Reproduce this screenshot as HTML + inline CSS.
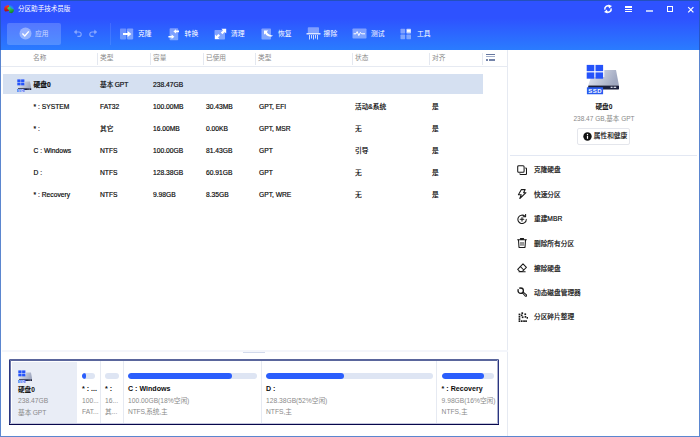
<!DOCTYPE html>
<html lang="zh-CN">
<head>
<meta charset="utf-8">
<title>分区助手技术员版</title>
<style>
html,body{margin:0;padding:0;}
body{width:700px;height:437px;overflow:hidden;background:#fff;font-family:"Liberation Sans","Noto Sans CJK SC",sans-serif;font-size:6.7px;color:#1c1c1c;position:relative;}
#win{position:absolute;left:0;top:0;width:698px;height:435px;border:1px solid #5b86cf;background:#fff;overflow:hidden;}
.abs{position:absolute;}
.t{position:absolute;white-space:nowrap;line-height:10px;height:10px;}
/* header */
#hdr{position:absolute;left:0;top:0;width:698px;height:49px;background:linear-gradient(#2e52ff 0px,#2e52ff 17px,#2a7cff 49px);}
#hdr .t{color:#fff;}
#title{left:17px;top:3px;font-size:6.55px;}
#apply{position:absolute;left:6px;top:22px;width:54px;height:22px;border-radius:2px;background:rgba(255,255,255,0.19);}
.tb{font-size:6.8px;color:#fff;}
/* table */
.th{color:#8a8a8a;font-size:6.7px;}
.vs{position:absolute;top:51.5px;width:1px;height:12px;background:#e4e8f0;}
.row .t{font-size:6.7px;color:#0a0a0a;-webkit-text-stroke:0.18px #0a0a0a;}
/* right */
.mi{font-size:6.7px;color:#0a0a0a;-webkit-text-stroke:0.18px #0a0a0a;}
.bar{position:absolute;top:371.8px;height:6px;border-radius:3px;background:#dee5f3;overflow:hidden;}
.bar i{display:block;height:6px;border-radius:3px;background:#2b5efc;}
#dbc .b{font-weight:bold;color:#0c0c0c;font-size:7.1px;}
#dbc .g{color:#8a8a8a;font-size:6.7px;}
</style>
</head>
<body>
<div id="win">
  <div id="hdr">
    <svg class="abs" style="left:3px;top:4px" width="11" height="10" viewBox="0 0 11 10">
      <defs><linearGradient id="lgR" x1="0" y1="0" x2="0" y2="1"><stop offset="0" stop-color="#ff3a24"/><stop offset="1" stop-color="#a81408"/></linearGradient>
      <linearGradient id="lgG" x1="0" y1="0" x2="0.5" y2="1"><stop offset="0" stop-color="#3cf070"/><stop offset="1" stop-color="#168428"/></linearGradient></defs>
      <path d="M5 0.3 C7.6 0.2 9.8 2 9.9 4.6 L7.4 4 L6.2 2.6 L5 2.8 Z" fill="#2487ee"/>
      <path d="M0.2 3.4 C0.4 1.4 2.4 0.1 5 0.3 V3 L3.6 3.6 L4.8 4.8 V6 L1.4 6.6 C0.4 6 0.1 4.6 0.2 3.4 Z" fill="url(#lgR)"/>
      <path d="M3.2 2.9 C4.4 2 5.6 1.9 6.4 2.3 L7.4 3.6 L9.9 4.6 C10.2 6 9.4 7.4 7.6 8.2 L5.2 7.8 V5 L3.9 4.3 Z" fill="url(#lgG)"/>
    </svg>
    <div class="t" id="title">分区助手技术员版</div>

    <!-- window controls -->
    <svg class="abs" style="left:601.6px;top:3.4px" width="10" height="10" viewBox="0 0 10 10" fill="none" stroke="#fff" stroke-width="1.5">
      <path d="M1.9 5.6 A3.1 3.1 0 0 1 6.6 2.3"/><path d="M8.1 4.4 A3.1 3.1 0 0 1 3.4 7.7"/>
      <path d="M5.4 0.6 L9 2 L6 4.4 Z" fill="#fff" stroke="none"/><path d="M4.6 9.4 L1 8 L4 5.6 Z" fill="#fff" stroke="none"/>
    </svg>
    <div class="abs" style="left:624px;top:5.4px;width:7px;height:1.3px;background:#fff"></div>
    <div class="abs" style="left:624px;top:7.7px;width:7px;height:1.3px;background:#fff"></div>
    <div class="abs" style="left:624px;top:10px;width:7px;height:1.3px;background:#fff"></div>
    <div class="abs" style="left:645px;top:9.4px;width:7px;height:1.3px;background:#b9c8ff"></div>
    <div class="abs" style="left:665.6px;top:5px;width:4.6px;height:4px;border:1.1px solid #fff"></div>
    <svg class="abs" style="left:686px;top:4.5px" width="8" height="8" viewBox="0 0 8 8" stroke="#fff" stroke-width="1.2"><path d="M1.2 1.2 L6.4 6.4 M6.4 1.2 L1.2 6.4"/></svg>

    <!-- apply -->
    <div id="apply"></div>
    <svg class="abs" style="left:18.2px;top:26.4px" width="13" height="13" viewBox="0 0 13 13"><circle cx="6.5" cy="6.5" r="6" fill="rgba(255,255,255,0.38)"/><path d="M3.4 6.6 L5.8 9 L9.8 4.4" fill="none" stroke="#fff" stroke-width="1.4"/></svg>
    <div class="t tb" style="left:34px;top:28px;color:rgba(255,255,255,0.7)">应用</div>
    <!-- undo redo -->
    <svg class="abs" style="left:72.1px;top:28.2px" width="10" height="9" viewBox="0 0 10 9" fill="none" stroke="rgba(255,255,255,0.42)" stroke-width="1.2"><path d="M3 3 H6 A2.2 2.2 0 0 1 6 7.4 H4.4"/><path d="M3.6 0.6 L0.8 3 L3.6 5.4 Z" fill="rgba(255,255,255,0.42)" stroke="none"/></svg>
    <svg class="abs" style="left:86.6px;top:28.2px" width="10" height="9" viewBox="0 0 10 9" fill="none" stroke="rgba(255,255,255,0.42)" stroke-width="1.2"><path d="M7 3 H4 A2.2 2.2 0 0 0 4 7.4 H5.6"/><path d="M6.4 0.6 L9.2 3 L6.4 5.4 Z" fill="rgba(255,255,255,0.42)" stroke="none"/></svg>
    <div class="abs" style="left:108.7px;top:22px;width:1px;height:22px;background:rgba(255,255,255,0.1)"></div>

    <!-- clone -->
    <svg class="abs" style="left:119.2px;top:26.6px" width="14" height="12" viewBox="0 0 14 12">
      <rect x="0" y="0.4" width="6.2" height="11" rx="0.8" fill="rgba(255,255,255,0.3)"/><rect x="7" y="0.4" width="6.2" height="11" rx="0.8" fill="rgba(255,255,255,0.38)"/>
      <path d="M3 5 H7.6 V3 L11.4 6 L7.6 9 V7 H3 Z" fill="#fff"/>
    </svg>
    <div class="t tb" style="left:137px;top:28px">克隆</div>
    <!-- convert -->
    <svg class="abs" style="left:167px;top:26.6px" width="13" height="13" viewBox="0 0 13 13">
      <rect x="1.6" y="0.2" width="8.6" height="12" rx="0.8" fill="rgba(255,255,255,0.38)"/>
      <path d="M11 2.6 H8 V1.2 L5.4 3.4 L8 5.6 V4.2 H11 Z" fill="#fff"/><path d="M0.4 8 H3.6 V6.6 L6.4 8.8 L3.6 11 V9.6 H0.4 Z" fill="#fff"/>
    </svg>
    <div class="t tb" style="left:183.6px;top:28px">转换</div>
    <!-- clean -->
    <svg class="abs" style="left:213px;top:27px" width="13" height="12" viewBox="0 0 13 12">
      <rect x="0.5" y="2" width="10.5" height="9.5" rx="0.8" fill="rgba(255,255,255,0.4)"/>
      <path d="M7.4 0.8 H12.2 V5.6 L10.6 4 L8.4 6.2 L6.8 4.6 L9 2.4 Z" fill="#fff"/><path d="M5.4 11 H1 V6.6 L2.4 8 L4.4 6 L6 7.6 L4 9.6 Z" fill="#fff"/>
    </svg>
    <div class="t tb" style="left:230px;top:28px">清理</div>
    <!-- recover -->
    <svg class="abs" style="left:260px;top:27px" width="13" height="12" viewBox="0 0 13 12">
      <rect x="0.5" y="0.5" width="9.5" height="11" rx="0.8" fill="rgba(255,255,255,0.4)"/>
      <path d="M3 2.6 H7.2 L5.8 4 C7 6.4 9 7.4 12 7.4 C10.4 9 6.4 9.6 4.2 5.6 L3 6.8 Z" fill="#fff"/>
    </svg>
    <div class="t tb" style="left:277px;top:28px">恢复</div>
    <!-- wipe -->
    <svg class="abs" style="left:305px;top:26px" width="15" height="14" viewBox="0 0 15 14">
      <rect x="1.8" y="0.3" width="11.2" height="6.2" rx="0.8" fill="rgba(255,255,255,0.4)"/>
      <rect x="0.5" y="6.2" width="14" height="1.2" fill="#fff"/>
      <path d="M3.5 8 V12.5 M5.5 8 V11.5 M7.5 8 V12.5 M9.5 8 V11.5 M11.5 8 V12.5" stroke="rgba(255,255,255,0.75)" stroke-width="1"/>
    </svg>
    <div class="t tb" style="left:322.6px;top:28px">擦除</div>
    <!-- test -->
    <svg class="abs" style="left:351px;top:27px" width="15" height="11" viewBox="0 0 15 11">
      <rect x="0.5" y="0.5" width="14" height="10" rx="0.8" fill="rgba(255,255,255,0.4)"/>
      <path d="M1.6 5.8 H4 L5.2 3.6 L6.8 7.6 L8.4 4.4 L9.6 5.8 H13" fill="none" stroke="#fff" stroke-width="1"/>
    </svg>
    <div class="t tb" style="left:370px;top:28px">测试</div>
    <!-- tools -->
    <svg class="abs" style="left:399px;top:27px" width="12" height="12" viewBox="0 0 12 12">
      <rect x="0.5" y="0.8" width="4.6" height="4.6" rx="0.6" fill="rgba(255,255,255,0.4)"/><rect x="6.4" y="0.8" width="4.6" height="4.6" rx="0.6" fill="rgba(255,255,255,0.7)"/>
      <rect x="0.5" y="6.6" width="4.6" height="4.6" rx="0.6" fill="rgba(255,255,255,0.4)"/><rect x="6.4" y="6.6" width="4.6" height="4.6" rx="0.6" fill="rgba(255,255,255,0.4)"/>
      <rect x="7" y="1.8" width="3.4" height="2" fill="#fff"/>
    </svg>
    <div class="t tb" style="left:416px;top:28px">工具</div>
  </div>

  <!-- table header -->
  <div id="thead">
    <div class="t th" style="left:32px;top:52px">名称</div>
    <div class="t th" style="left:99px;top:52px">类型</div>
    <div class="t th" style="left:152px;top:52px">容量</div>
    <div class="t th" style="left:205px;top:52px">已使用</div>
    <div class="t th" style="left:257px;top:52px">类型</div>
    <div class="t th" style="left:354px;top:52px">状态</div>
    <div class="t th" style="left:431px;top:52px">对齐</div>
    <div class="vs" style="left:96px"></div><div class="vs" style="left:149px"></div><div class="vs" style="left:202px"></div>
    <div class="vs" style="left:254px"></div><div class="vs" style="left:351px"></div><div class="vs" style="left:428px"></div><div class="vs" style="left:481px"></div>
    <div class="abs" style="left:485px;top:53px;width:9px;height:1px;background:#66779f"></div>
    <div class="abs" style="left:485px;top:55.4px;width:9px;height:1px;background:#a3afcb"></div>
    <div class="abs" style="left:485px;top:57.6px;width:2.2px;height:2.6px;background:#7484aa"></div>
    <div class="abs" style="left:488.4px;top:57.6px;width:5.6px;height:2.6px;background:#7484aa"></div>
    <div class="abs" style="left:0;top:65px;width:507px;height:1px;background:#e6eaf2"></div>
  </div>

  <!-- rows -->
  <div class="abs" style="left:2px;top:73px;width:479.5px;height:20px;background:#d5e0f1"></div>
  <svg class="abs" style="left:16.1px;top:77.7px" width="14.7" height="13.4" viewBox="0 0 34 31">
      <defs><linearGradient id="gB" x1="0" y1="0" x2="1" y2="0.3"><stop offset="0" stop-color="#e8ebf3"/><stop offset="1" stop-color="#a0a8c0"/></linearGradient></defs>
      <path d="M2.2 21.6 L5 13 H18.3 V6 H30 L33 21.6 Z" fill="url(#gB)"/>
      <rect x="2.2" y="21.4" width="30.8" height="4" rx="0.6" fill="#1a1f3c"/>
      <rect x="24.6" y="22.7" width="2" height="1.2" fill="#e8ebf5"/><rect x="27.6" y="22.7" width="2.6" height="1.2" fill="#e8ebf5"/>
      <rect x="0.7" y="0.9" width="7.6" height="6.3" fill="#2553fa"/><rect x="9.5" y="0.9" width="7.6" height="6.3" fill="#2553fa"/>
      <rect x="0.7" y="8.4" width="7.6" height="6.3" fill="#2553fa"/><rect x="9.5" y="8.4" width="7.6" height="6.3" fill="#2553fa"/>
      <rect x="0.9" y="23.3" width="16.2" height="7" rx="0.5" fill="#2a5cf0"/>
      <text x="9.2" y="29.2" font-family="Liberation Sans, sans-serif" font-weight="bold" font-size="6" fill="#fff" text-anchor="middle" letter-spacing="0.5">SSD</text>
    </svg>
  <div class="row">
    <div class="t" style="left:32.6px;top:79px;font-weight:bold">硬盘0</div>
    <div class="t" style="left:99px;top:79px;word-spacing:-0.6px">基本 GPT</div>
    <div class="t" style="left:152px;top:79px">238.47GB</div>
  </div>
  <div class="row">
    <div class="t" style="left:32.6px;top:101px">* : SYSTEM</div><div class="t" style="left:99px;top:101px">FAT32</div>
    <div class="t" style="left:152px;top:101px">100.00MB</div><div class="t" style="left:205px;top:101px">30.43MB</div>
    <div class="t" style="left:258px;top:101px">GPT, EFI</div><div class="t" style="left:354px;top:101px">活动&amp;系统</div><div class="t" style="left:431px;top:101px">是</div>
  </div>
  <div class="row">
    <div class="t" style="left:32.6px;top:123px">* :</div><div class="t" style="left:99px;top:123px">其它</div>
    <div class="t" style="left:152px;top:123px">16.00MB</div><div class="t" style="left:205px;top:123px">0.00KB</div>
    <div class="t" style="left:258px;top:123px">GPT, MSR</div><div class="t" style="left:354px;top:123px">无</div><div class="t" style="left:431px;top:123px">是</div>
  </div>
  <div class="row">
    <div class="t" style="left:32.6px;top:145px">C : Windows</div><div class="t" style="left:99px;top:145px">NTFS</div>
    <div class="t" style="left:152px;top:145px">100.00GB</div><div class="t" style="left:205px;top:145px">81.43GB</div>
    <div class="t" style="left:258px;top:145px">GPT</div><div class="t" style="left:354px;top:145px">引导</div><div class="t" style="left:431px;top:145px">是</div>
  </div>
  <div class="row">
    <div class="t" style="left:32.6px;top:167px">D :</div><div class="t" style="left:99px;top:167px">NTFS</div>
    <div class="t" style="left:152px;top:167px">128.38GB</div><div class="t" style="left:205px;top:167px">60.91GB</div>
    <div class="t" style="left:258px;top:167px">GPT</div><div class="t" style="left:354px;top:167px">无</div><div class="t" style="left:431px;top:167px">是</div>
  </div>
  <div class="row">
    <div class="t" style="left:32.6px;top:189px">* : Recovery</div><div class="t" style="left:99px;top:189px">NTFS</div>
    <div class="t" style="left:152px;top:189px">9.98GB</div><div class="t" style="left:205px;top:189px">8.35GB</div>
    <div class="t" style="left:258px;top:189px">GPT, WRE</div><div class="t" style="left:354px;top:189px">无</div><div class="t" style="left:431px;top:189px">是</div>
  </div>

  <!-- vertical divider -->
  <div class="abs" style="left:506px;top:49px;width:1px;height:386px;background:#e6eaf2"></div>

  <!-- right panel -->
  <div id="right">
    <svg class="abs" style="left:585px;top:63px" width="34" height="31" viewBox="0 0 34 31">
      <defs><linearGradient id="gA" x1="0" y1="0" x2="1" y2="0.3"><stop offset="0" stop-color="#e8ebf3"/><stop offset="1" stop-color="#a0a8c0"/></linearGradient></defs>
      <path d="M2.2 21.6 L5 13 H18.3 V6 H30 L33 21.6 Z" fill="url(#gA)"/>
      <rect x="2.2" y="21.4" width="30.8" height="4" rx="0.6" fill="#1a1f3c"/>
      <rect x="24.6" y="22.7" width="2" height="1.2" fill="#e8ebf5"/><rect x="27.6" y="22.7" width="2.6" height="1.2" fill="#e8ebf5"/>
      <rect x="0.7" y="0.9" width="7.6" height="6.3" fill="#2553fa"/><rect x="9.5" y="0.9" width="7.6" height="6.3" fill="#2553fa"/>
      <rect x="0.7" y="8.4" width="7.6" height="6.3" fill="#2553fa"/><rect x="9.5" y="8.4" width="7.6" height="6.3" fill="#2553fa"/>
      <rect x="0.9" y="23.3" width="16.2" height="7" rx="0.5" fill="#2a5cf0"/>
      <text x="9.2" y="29.2" font-family="Liberation Sans, sans-serif" font-weight="bold" font-size="6" fill="#fff" text-anchor="middle" letter-spacing="0.5">SSD</text>
    </svg>
    <div class="t" style="left:508px;width:190px;text-align:center;top:101px;font-weight:bold;font-size:6.7px;color:#111">硬盘0</div>
    <div class="t" style="left:508px;width:190px;text-align:center;top:113px;font-size:6.5px;color:#8a8a8a">238.47 GB,基本 GPT</div>
    <div class="abs" style="left:576px;top:127px;width:53px;height:17px;border:1px solid #e4e6ec;border-radius:2px;box-sizing:border-box"></div>
    <svg class="abs" style="left:581.5px;top:130.5px" width="9" height="9" viewBox="0 0 9 9"><circle cx="4.5" cy="4.5" r="4.2" fill="#111"/><rect x="3.9" y="3.8" width="1.2" height="3" fill="#fff"/><rect x="3.9" y="1.9" width="1.2" height="1.2" fill="#fff"/></svg>
    <div class="t" style="left:592.8px;top:130px;font-size:6.7px;color:#111;-webkit-text-stroke:0.15px #111">属性和健康</div>
    <div class="abs" style="left:509px;top:154px;width:187px;height:1px;background:#e3e8f3"></div>

    <!-- menu icons -->
    <svg class="abs" style="left:516.3px;top:163.9px" width="10" height="10" viewBox="0 0 10 10" fill="none" stroke="#1a1a1a" stroke-width="1.05" stroke-linejoin="round" stroke-linecap="round"><rect x="0.7" y="0.7" width="6.4" height="6.6" rx="1" /><path d="M8.6 2.9 Q9.5 2.9 9.5 3.8 V8.6 Q9.5 9.5 8.6 9.5 H3.8 Q2.9 9.5 2.9 8.8"/></svg>
    <svg class="abs" style="left:516.3px;top:188.4px" width="10" height="10" viewBox="0 0 10 10" fill="none" stroke="#1a1a1a" stroke-width="1.05" stroke-linejoin="round" stroke-linecap="round"><path d="M4.4 0.6 H8.2 L6.6 3.7 H9 L2.8 9.5 L4.2 5.8 H1.4 Z"/></svg>
    <svg class="abs" style="left:516.3px;top:212.9px" width="10" height="10" viewBox="0 0 10 10" fill="none" stroke="#1a1a1a" stroke-width="1.05" stroke-linejoin="round" stroke-linecap="round"><path d="M8 2.3 A4.2 4.2 0 1 0 9.3 5.4"/><path d="M8.6 0.3 V2.7 H6.2"/><path d="M5 3.5 V7.1 M3.2 5.3 H6.8"/></svg>
    <svg class="abs" style="left:516.3px;top:237.4px" width="10" height="10" viewBox="0 0 10 10" fill="none" stroke="#1a1a1a" stroke-width="1.05" stroke-linejoin="round" stroke-linecap="round"><path d="M0.6 1.8 H9.4 M3.4 0.6 H6.6"/><path d="M1.5 2 L2 9.4 H8 L8.5 2"/><path d="M4 4.4 V7.4 M6 4.4 V7.4" stroke-width="0.9"/></svg>
    <svg class="abs" style="left:516.3px;top:262.4px" width="10" height="10" viewBox="0 0 10 10" fill="none" stroke="#1a1a1a" stroke-width="1.05" stroke-linejoin="round" stroke-linecap="round"><path d="M6 0.9 L9.4 4.3 L5.2 8.5 H2.8 L0.7 6.3 Z"/><path d="M3.4 3.6 L6.8 7"/><path d="M2 8.8 H8.2"/></svg>
    <svg class="abs" style="left:516.3px;top:286.4px" width="10" height="10" viewBox="0 0 10 10" fill="none" stroke="#1a1a1a" stroke-width="1.05" stroke-linejoin="round" stroke-linecap="round"><circle cx="3.7" cy="3.7" r="2.7" stroke-width="1.3"/><path d="M1 1 L3.7 3.7" stroke="#fff" stroke-width="1.1"/><path d="M5.5 6 L8.2 9 Q9 9.6 9.5 8.9 Q9.9 8.3 9.2 7.7 L6.2 5.2" /></svg>
    <svg class="abs" style="left:516.5px;top:310.9px" width="10.5" height="10" viewBox="0 0 10.5 10" fill="#1a1a1a"><rect x="0.6" y="1.6" width="1.7" height="1.7"/><rect x="0.6" y="3.9" width="1.7" height="1.7"/><rect x="0.6" y="6.2" width="1.7" height="1.7"/><rect x="0.6" y="8.3" width="1.7" height="1.7"/><rect x="2.9" y="8.3" width="1.7" height="1.7"/><rect x="5.2" y="8.3" width="1.7" height="1.7"/><rect x="7.2" y="8.3" width="1.7" height="1.7"/><rect x="3.4" y="0.3" width="1.7" height="1.7"/><rect x="6.4" y="1.4" width="1.7" height="1.7"/><rect x="3.8" y="4.4" width="1.7" height="1.7"/><rect x="6.6" y="4.0" width="1.7" height="1.7"/><rect x="8.6" y="5.0" width="1.7" height="1.7"/><rect x="2.8" y="2.4" width="1.7" height="1.7"/></svg>
    <div class="t mi" style="left:533px;top:164px">克隆硬盘</div>
    <div class="t mi" style="left:533px;top:189px">快速分区</div>
    <div class="t mi" style="left:533px;top:213px">重建MBR</div>
    <div class="t mi" style="left:533px;top:238px">删除所有分区</div>
    <div class="t mi" style="left:533px;top:263px">擦除硬盘</div>
    <div class="t mi" style="left:533px;top:287px">动态磁盘管理器</div>
    <div class="t mi" style="left:533px;top:311px">分区碎片整理</div>
  </div>

  <!-- bottom panel -->
  <div class="abs" style="left:1px;top:349px;width:506px;height:2.4px;background:#f4f6fb"></div>
  <div class="abs" style="left:242px;top:350.6px;width:22px;height:1px;background:#d2daec"></div>
  <div id="diskbar" class="abs" style="left:8px;top:358px;width:490px;height:66px;background:#fff;">
    <div class="abs" style="left:2.9px;top:3px;width:65.6px;height:60.8px;background:#e9edf6"></div>
    <div class="abs" style="left:91px;top:2px;width:1px;height:62px;background:#e6eaf2"></div>
    <div class="abs" style="left:113.6px;top:2px;width:1px;height:62px;background:#e6eaf2"></div>
    <div class="abs" style="left:252px;top:2px;width:1px;height:62px;background:#e6eaf2"></div>
    <div class="abs" style="left:427.4px;top:2px;width:1px;height:62px;background:#e6eaf2"></div>
    <div class="abs" style="left:0;top:0;width:490px;height:2px;background:#5a669c;border-radius:1px 1px 0 0"></div>
    <div class="abs" style="left:1px;top:1px;width:1px;height:64px;background:#6a74a8"></div>
    <div class="abs" style="left:0;top:1px;width:1px;height:65px;background:#2c377f"></div>
    <div class="abs" style="left:488px;top:1px;width:1px;height:64px;background:#a9aecb"></div>
    <div class="abs" style="left:489px;top:1px;width:1px;height:65px;background:#2a3480"></div>
    <div class="abs" style="left:1px;top:64px;width:488px;height:1px;background:#c4c7dc"></div>
    <div class="abs" style="left:0;top:65px;width:490px;height:1px;background:#08084c"></div>
  </div>
  <div id="dbc">
    <svg class="abs" style="left:16.7px;top:368.7px" width="14.7" height="13.4" viewBox="0 0 34 31">
      <defs><linearGradient id="gC" x1="0" y1="0" x2="1" y2="0.3"><stop offset="0" stop-color="#e8ebf3"/><stop offset="1" stop-color="#a0a8c0"/></linearGradient></defs>
      <path d="M2.2 21.6 L5 13 H18.3 V6 H30 L33 21.6 Z" fill="url(#gC)"/>
      <rect x="2.2" y="21.4" width="30.8" height="4" rx="0.6" fill="#1a1f3c"/>
      <rect x="24.6" y="22.7" width="2" height="1.2" fill="#e8ebf5"/><rect x="27.6" y="22.7" width="2.6" height="1.2" fill="#e8ebf5"/>
      <rect x="0.7" y="0.9" width="7.6" height="6.3" fill="#2553fa"/><rect x="9.5" y="0.9" width="7.6" height="6.3" fill="#2553fa"/>
      <rect x="0.7" y="8.4" width="7.6" height="6.3" fill="#2553fa"/><rect x="9.5" y="8.4" width="7.6" height="6.3" fill="#2553fa"/>
      <rect x="0.9" y="23.3" width="16.2" height="7" rx="0.5" fill="#2a5cf0"/>
      <text x="9.2" y="29.2" font-family="Liberation Sans, sans-serif" font-weight="bold" font-size="6" fill="#fff" text-anchor="middle" letter-spacing="0.5">SSD</text>
    </svg>
    <div class="t b" style="left:17px;top:384px;font-size:6.6px">硬盘0</div>
    <div class="t g" style="left:17px;top:395px">238.47GB</div>
    <div class="t g" style="left:17px;top:406px;word-spacing:-0.6px;transform:translateY(0.6px)">基本 GPT</div>

    <div class="bar" style="left:80.8px;width:13.5px"><i style="width:4px"></i></div>
    <div class="t b" style="left:81px;top:383px">* : ...</div>
    <div class="t g" style="left:81px;top:395px">100...</div>
    <div class="t g" style="left:81px;top:406px">FAT...</div>

    <div class="bar" style="left:104px;width:13.5px"></div>
    <div class="t b" style="left:104px;top:383px">* :</div>
    <div class="t g" style="left:104px;top:395px">16...</div>
    <div class="t g" style="left:104px;top:406px">其...</div>

    <div class="bar" style="left:127px;width:129px"><i style="width:104px"></i></div>
    <div class="t b" style="left:127px;top:383px">C : Windows</div>
    <div class="t g" style="left:127px;top:395px">100.00GB(18%空闲)</div>
    <div class="t g" style="left:127px;top:406px;letter-spacing:-0.2px">NTFS,系统,主</div>

    <div class="bar" style="left:265px;width:167px"><i style="width:78px"></i></div>
    <div class="t b" style="left:265px;top:383px">D :</div>
    <div class="t g" style="left:265px;top:395px">128.38GB(52%空闲)</div>
    <div class="t g" style="left:265px;top:406px">NTFS,主</div>

    <div class="bar" style="left:440.6px;width:52.4px"><i style="width:42.6px"></i></div>
    <div class="t b" style="left:440.6px;top:383px">* : Recovery</div>
    <div class="t g" style="left:440.6px;top:395px">9.98GB(16%空闲)</div>
    <div class="t g" style="left:440.6px;top:406px">NTFS,主</div>
  </div>
</div>
<div class="abs" style="left:0;top:0;width:700px;height:1px;background:#2350bd"></div>
<div class="abs" style="left:0;top:0;width:1px;height:50px;background:#2656c6"></div>
<div class="abs" style="left:699px;top:0;width:1px;height:50px;background:#2656c6"></div>
</body>
</html>
